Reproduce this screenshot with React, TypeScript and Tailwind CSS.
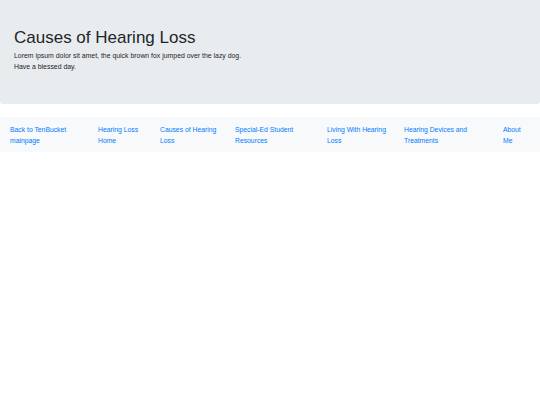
import React from 'react';

const links = [
  { label: 'Back to TenBucket mainpage', w: 'w-[88px]', max: 'max-w-[62px]' },
  { label: 'Hearing Loss Home', w: 'w-[62px]', max: 'max-w-[50px]' },
  { label: 'Causes of Hearing Loss', w: 'w-[75px]', max: 'max-w-[62px]' },
  { label: 'Special-Ed Student Resources', w: 'w-[92px]', max: 'max-w-[64px]' },
  { label: 'Living With Hearing Loss', w: 'w-[77px]', max: 'max-w-[68px]' },
  { label: 'Hearing Devices and Treatments', w: 'w-[99px]', max: 'max-w-[72px]' },
  { label: 'About Me', w: 'w-[30px]', max: 'max-w-[22px]' },
];

export default function App() {
  return (
    <div className="min-h-[405px] bg-white font-['Liberation_Sans',Arial,sans-serif] text-[#212529]">
      {/* jumbotron */}
      <div className="h-[104px] bg-[#e9ecef] rounded-b-[3px] px-[14px] pt-[27px]">
        <h1 className="text-[17px] leading-[22px] font-normal">Causes of Hearing Loss</h1>
        <p className="mt-[1px] text-[6.9px] leading-[11px] max-w-[232px]">
          Lorem ipsum dolor sit amet, the quick brown fox jumped over the lazy dog. Have a blessed day.
        </p>
      </div>

      {/* nav bar */}
      <nav className="mt-[13px] h-[35px] bg-[#f8f9fa] flex items-start pl-[10px] pt-[7px]">
        {links.map((l) => (
          <div key={l.label} className={`${l.w} shrink-0`}>
            <a href="#" className={`block ${l.max} text-[6.8px] leading-[11px] text-[#007bff]`}>
              {l.label}
            </a>
          </div>
        ))}
      </nav>
    </div>
  );
}
